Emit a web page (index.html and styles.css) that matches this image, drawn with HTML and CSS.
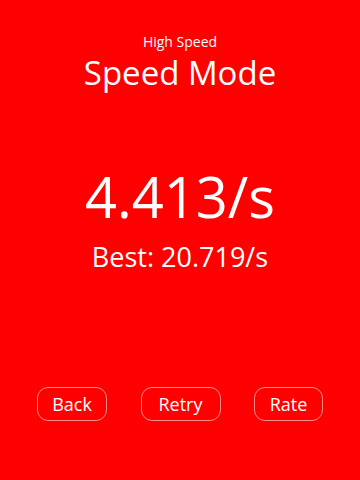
FILE: index.html
```html
<!DOCTYPE html>
<html>
<head>
<meta charset="utf-8">
<link rel="stylesheet" href="styles.css">
</head>
<body>
<div class="screen">
  <div class="header">
    <div class="subtitle">High Speed</div>
    <div class="title">Speed Mode</div>
  </div>
  <div class="result">
    <div class="score">4.413/s</div>
    <div class="best">Best: 20.719/s</div>
  </div>
  <div class="actions">
    <button class="btn btn-back">Back</button>
    <button class="btn btn-retry">Retry</button>
    <button class="btn btn-rate">Rate</button>
  </div>
</div>
</body>
</html>
```
FILE: styles.css
```css
html, body {
  margin: 0;
  padding: 0;
  background: #ff0000;
}
.screen {
  width: 360px;
  height: 480px;
  background: #ff0000;
  color: #ffffff;
  font-family: "Open Sans", "Noto Sans", sans-serif;
  display: flex;
  flex-direction: column;
  align-items: center;
}
.header {
  display: flex;
  flex-direction: column;
  align-items: center;
  padding-top: 32px;
}
.subtitle {
  font-size: 14px;
  line-height: 20px;
}
.title {
  font-size: 33px;
  line-height: 42px;
}
.result {
  display: flex;
  flex-direction: column;
  align-items: center;
  margin-top: 67px;
}
.score {
  font-size: 56px;
  line-height: 70px;
}
.best {
  font-size: 27px;
  line-height: 34px;
  margin-top: 9px;
}
.actions {
  margin-top: auto;
  margin-bottom: 59px;
  width: 100%;
  display: flex;
  justify-content: space-between;
  padding: 0 37px;
  box-sizing: border-box;
}
.btn {
  height: 34px;
  border: 1px solid rgba(255, 255, 255, 0.55);
  border-radius: 11px;
  background: transparent;
  color: #ffffff;
  font-family: inherit;
  font-size: 18px;
  padding: 0;
}
.btn-back { width: 70px; }
.btn-retry { width: 80px; }
.btn-rate { width: 69px; }
```
